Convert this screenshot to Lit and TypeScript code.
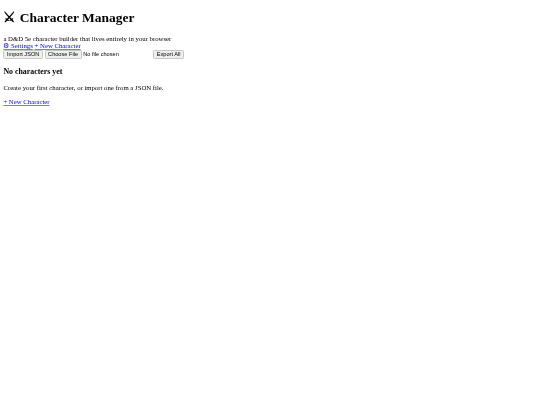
import { LitElement, html, css } from "lit";
import { customElement } from "lit/decorators.js";

@customElement("app-root")
export class AppRoot extends LitElement {
  static styles = css`
    :host {
      display: block;
      zoom: 0.421875;
      padding: 0 8px 8px;
      font-family: "Liberation Serif", "Times New Roman", serif;
      font-size: 16px;
      color: #000;
      filter: blur(0.3px);
    }
    h1 { font-size: 2em; font-weight: bold; margin: 0.67em 0; }
    h2 { font-size: 1.17em; font-weight: bold; margin: 1em 0; }
    p { margin: 0; }
    .empty p { margin: 1em 0 18px; }
    a { color: #0000ee; text-decoration: underline; text-decoration-color: #7a7af5; }
    button, .file { font-family: "Liberation Sans", Arial, sans-serif; font-size: 13.333px; }
    button, .file::file-selector-button { border: 1px solid #c6c6c6; border-radius: 3px; background: #efefef; color: #000; }
  `;
  render() {
    return html`
      <h1>⚔ Character Manager</h1>
      <div>a D&amp;D 5e character builder that lives entirely in your browser</div>
      <div><a href="#">⚙ Settings</a> <a href="#">+ New Character</a></div>
      <div>
        <button>Import JSON</button>
        <input class="file" type="file" />
        <button>Export All</button>
      </div>
      <div class="empty">
        <h2>No characters yet</h2>
        <p>Create your first character, or import one from a JSON file.</p>
        <a href="#">+ New Character</a>
      </div>
    `;
  }
}
